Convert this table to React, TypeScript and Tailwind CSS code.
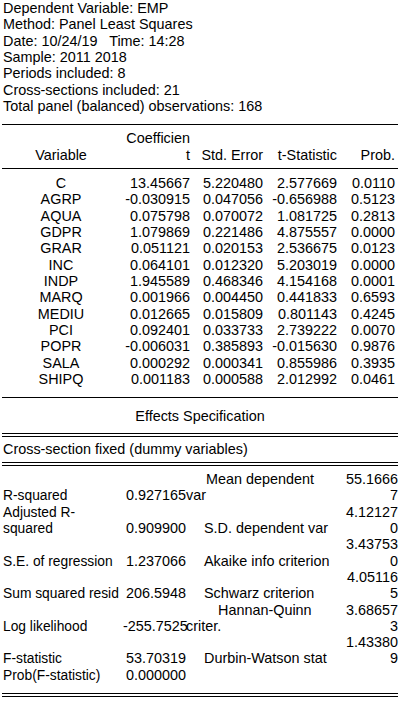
const header = [
  "Dependent Variable: EMP",
  "Method: Panel Least Squares",
  "Date: 10/24/19   Time: 14:28",
  "Sample: 2011 2018",
  "Periods included: 8",
  "Cross-sections included: 21",
  "Total panel (balanced) observations: 168",
];

const coefs = [
  ["C", "13.45667", "5.220480", "2.577669", "0.0110"],
  ["AGRP", "-0.030915", "0.047056", "-0.656988", "0.5123"],
  ["AQUA", "0.075798", "0.070072", "1.081725", "0.2813"],
  ["GDPR", "1.079869", "0.221486", "4.875557", "0.0000"],
  ["GRAR", "0.051121", "0.020153", "2.536675", "0.0123"],
  ["INC", "0.064101", "0.012320", "5.203019", "0.0000"],
  ["INDP", "1.945589", "0.468346", "4.154168", "0.0001"],
  ["MARQ", "0.001966", "0.004450", "0.441833", "0.6593"],
  ["MEDIU", "0.012665", "0.015809", "0.801143", "0.4245"],
  ["PCI", "0.092401", "0.033733", "2.739222", "0.0070"],
  ["POPR", "-0.006031", "0.385893", "-0.015630", "0.9876"],
  ["SALA", "0.000292", "0.000341", "0.855986", "0.3935"],
  ["SHIPQ", "0.001183", "0.000588", "2.012992", "0.0461"],
];

// label, value, label2, value2, indent of label2
const stats: [string, string, string, string, string][] = [
  ["", "", "Mean dependent", "55.1666", "pl-[20px]"],
  ["R-squared", "0.927165", "var", "7", "pl-0"],
  ["Adjusted R-", "", "", "4.12127", "pl-0"],
  ["squared", "0.909900", "S.D. dependent var", "0", "pl-[18px]"],
  ["", "", "", "3.43753", "pl-0"],
  ["S.E. of regression", "1.237066", "Akaike info criterion", "0", "pl-[18px]"],
  ["", "", "", "4.05116", "pl-0"],
  ["Sum squared resid", "206.5948", "Schwarz criterion", "5", "pl-[18px]"],
  ["", "", "Hannan-Quinn", "3.68657", "pl-[32px]"],
  ["Log likelihood", "-255.7525", "criter.", "3", "pl-0"],
  ["", "", "", "1.43380", "pl-0"],
  ["F-statistic", "53.70319", "Durbin-Watson stat", "9", "pl-[18px]"],
  ["Prob(F-statistic)", "0.000000", "", "", "pl-0"],
];

const Rule = () => <div className="h-px bg-black" />;

const Double = () => (
  <div className="flex flex-col gap-[2px]">
    <div className="h-px bg-black" />
    <div className="h-px bg-black" />
  </div>
);

const App = () => {
  return (
    <div
      className="w-[405px] h-[701px] bg-white text-black text-[14.4px] leading-[16.33px] overflow-hidden"
      style={{ fontFamily: '"Liberation Sans", Arial, sans-serif' }}
    >
      <div className="pl-[3px] whitespace-pre">
        {header.map((h) => (
          <div key={h}>{h}</div>
        ))}
      </div>

      <div className="ml-[2px] w-[396px] mt-[10px]">
        <Rule />
        <div className="grid grid-cols-[118px_70px_73px_74px_58px] pt-[5px] pb-[5px]">
          <div />
          <div className="text-right">Coefficien</div>
          <div />
          <div />
          <div />
          <div className="text-center">Variable</div>
          <div className="text-right">t</div>
          <div className="text-right">Std. Error</div>
          <div className="text-right">t-Statistic</div>
          <div className="text-right">Prob.</div>
        </div>
        <Rule />
        <div className="grid grid-cols-[118px_70px_73px_74px_58px] pt-[6px]">
          {coefs.map((r) => (
            <div key={r[0]} className="contents">
              <div className="text-center">{r[0]}</div>
              <div className="text-right">{r[1]}</div>
              <div className="text-right">{r[2]}</div>
              <div className="text-right">{r[3]}</div>
              <div className="text-right">{r[4]}</div>
            </div>
          ))}
        </div>
        <div className="mt-[10px]">
          <Rule />
        </div>
        <div className="text-center pt-[10px] pb-[8px]">Effects Specification</div>
        <Double />
        <div className="pl-px pt-[4px] pb-[5px]">Cross-section fixed (dummy variables)</div>
        <Double />
        <div className="grid grid-cols-[121px_63px_154px_58px] auto-rows-[16.33px] pt-[5px] whitespace-nowrap">
          {stats.map((s, i) => (
            <div key={i} className="contents">
              <div className="pl-px text-[13.8px] pt-px">{s[0]}</div>
              <div className="text-right">{s[1]}</div>
              <div className={s[4]}>{s[2]}</div>
              <div className="text-right">{s[3]}</div>
            </div>
          ))}
        </div>
        <div className="mt-[10px]">
          <Double />
        </div>
      </div>
    </div>
  );
};

export default App;
